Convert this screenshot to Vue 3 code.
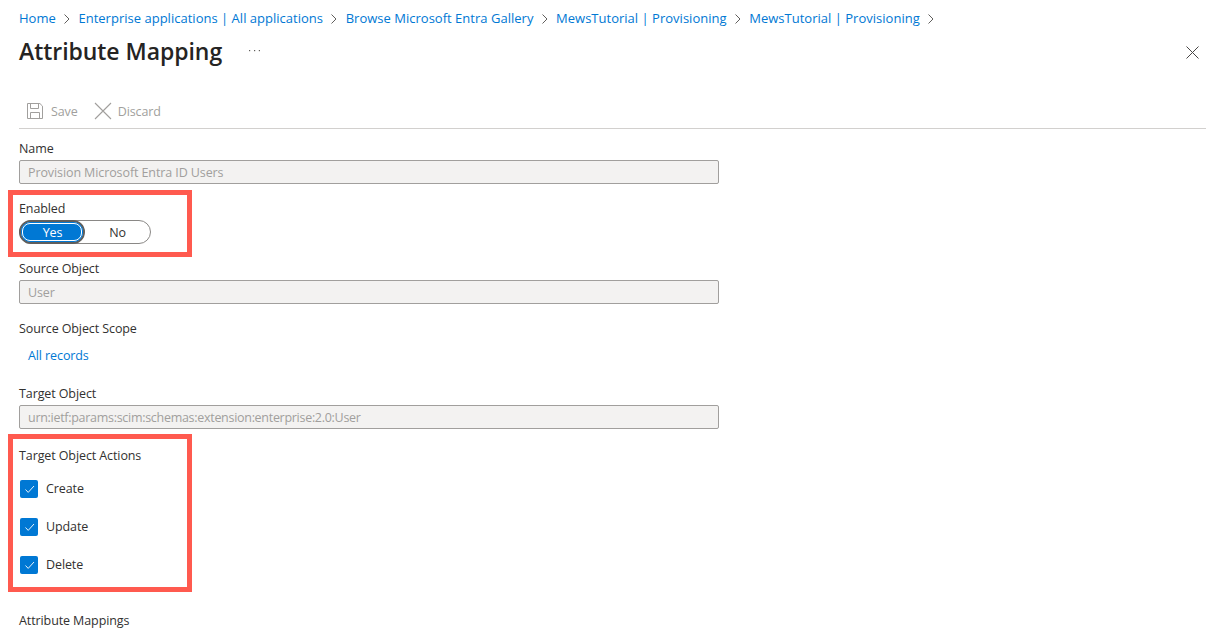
<script setup>
const crumbs = ['Home', 'Enterprise applications | All applications', 'Browse Microsoft Entra Gallery', 'MewsTutorial | Provisioning', 'MewsTutorial | Provisioning']
const actions = ['Create', 'Update', 'Delete']
</script>

<template>
  <div class="page">
    <nav class="crumbs">
      <template v-for="(c, i) in crumbs" :key="i">
        <a class="crumb">{{ c }}</a>
        <svg class="chev" width="8" height="10" viewBox="0 0 8 10"><path d="M1.5 .5 6 5 1.5 9.5" fill="none" stroke="#605e5c" stroke-width="1"/></svg>
      </template>
    </nav>
    <header class="head">
      <h1>Attribute Mapping</h1>
      <svg class="more" width="11" height="3" viewBox="0 0 11 3" fill="#605e5c"><rect x="0" y="1" width="1.2" height="1.2"/><rect x="5" y="1" width="1.2" height="1.2"/><rect x="9.8" y="1" width="1.2" height="1.2"/></svg>
      <svg class="close" width="13" height="13" viewBox="0 0 13 13"><path d="M.5 .5l12 12M12.5 .5l-12 12" stroke="#484644" stroke-width="1" fill="none"/></svg>
    </header>
    <div class="toolbar">
      <span class="tool">
        <svg width="16" height="16" viewBox="0 0 16 16" fill="none" stroke="#a19f9d"><path d="M.5 .5h12.4l2.6 2.6v12.4H.5z"/><path d="M3.5 .5v5h8v-5M3.5 15.5v-6h9v6"/></svg>
        Save
      </span>
      <span class="tool tool2">
        <svg width="18" height="18" viewBox="0 0 18 18" fill="none" stroke="#a19f9d" stroke-width="1.1"><path d="M1 1l16 16M17 1 1 17"/></svg>
        Discard
      </span>
    </div>
    <main class="form">
      <div class="field f-name">
        <label>Name</label>
        <div class="input">Provision Microsoft Entra ID Users</div>
      </div>
      <div class="field f-gap">
        <label>Enabled</label>
        <div class="toggle">
          <span class="opt on"><span class="yes">Yes</span></span>
          <span class="opt">No</span>
        </div>
      </div>
      <div class="field f-gap">
        <label>Source Object</label>
        <div class="input">User</div>
      </div>
      <div class="field f-gap">
        <label>Source Object Scope</label>
        <a class="link">All records</a>
      </div>
      <div class="field f-target">
        <label>Target Object</label>
        <div class="input urn">urn:ietf:params:scim:schemas:extension:enterprise:2.0:User</div>
      </div>
      <div class="field f-actions">
        <label>Target Object Actions</label>
        <div class="checks">
          <div v-for="a in actions" :key="a" class="check">
            <span class="box">
              <svg width="14" height="14" viewBox="0 0 14 14"><path d="M3.5 7.5 6.2 10.4 12 4" fill="none" stroke="#e6f2fb" stroke-width="1"/></svg>
            </span>
            <span class="check-text">{{ a }}</span>
          </div>
        </div>
      </div>
      <div class="section">Attribute Mappings</div>
    </main>
    <div class="mark mark1"></div>
    <div class="mark mark2"></div>
  </div>
</template>

<style scoped>
.page {
  position: relative;
  width: 1206px;
  height: 632px;
  overflow: hidden;
  background: #fff;
  color: #323130;
  font-family: "Open Sans", "Noto Sans", sans-serif;
  font-size: 12.5px;
  letter-spacing: -0.1px;
  box-sizing: border-box;
  padding: 8px 0 0 19px;
}
.crumbs {
  display: flex;
  align-items: center;
  height: 20px;
  gap: 7.3px;
  font-size: 13px;
  letter-spacing: 0.015px;
}
.crumb { color: #0078d4; }
.chev { margin-top: 1px; }
.head {
  display: flex;
  align-items: center;
  height: 36px;
  margin-top: 5px;
}
h1 {
  margin: 0;
  font-size: 23px;
  font-weight: 600;
  letter-spacing: -0.05px;
  color: #252423;
}
.more {
  margin-left: 27px;
  margin-top: -1px;
}
.close { margin-left: auto; margin-right: 7px; margin-top: 2px; }
.toolbar {
  display: flex;
  align-items: center;
  height: 30px;
  margin-top: 27px;
  padding-left: 8px;
  padding-bottom: 2px;
  border-bottom: 1px solid #d2d0ce;
  color: #a19f9d;
}
.tool { display: flex; align-items: center; gap: 8px; }
.tool2 { margin-left: 16px; gap: 6px; }
.form { display: flex; flex-direction: column; }
.field { width: 700px; }
.field label { display: block; height: 18px; line-height: 20px; }
.input {
  box-sizing: border-box;
  height: 24px;
  line-height: 24px;
  margin-top: 3px;
  padding-left: 8px;
  background: #f3f2f1;
  border: 1px solid #a19f9d;
  border-radius: 2px;
  color: #a19f9d;
}
.urn { letter-spacing: -0.29px; }
.f-name { margin-top: 10px; }
.f-gap { margin-top: 15px; }
.f-target { margin-top: 20px; }
.f-actions { margin-top: 17px; }
.toggle {
  box-sizing: border-box;
  display: flex;
  width: 132px;
  height: 24px;
  margin-top: 3px;
  border: 1px solid #8a8886;
  border-radius: 12px;
  align-items: center;
}
.opt {
  display: flex;
  justify-content: center;
  align-items: center;
  width: 65px;
}
.opt.on {
  box-sizing: border-box;
  flex: none;
  width: 66px;
  height: 24px;
  margin-left: -1px;
  border: 2px solid #605e5c;
  border-radius: 12px;
  padding: 1px;
}
.yes {
  width: 100%;
  height: 100%;
  line-height: 18px;
  padding-left: 1px;
  text-align: center;
  background: #0078d4;
  color: #fff;
  border: 1px solid #fff;
  box-shadow: 0 0 0 1px #0078d4;
  border-radius: 8px;
  box-sizing: border-box;
}
.link {
  display: block;
  color: #0078d4;
  margin: 9px 0 0 9px;
  line-height: 20px;
  height: 18px;
}
.checks {
  display: flex;
  flex-direction: column;
  gap: 20px;
  margin-top: 16px;
}
.check { display: flex; align-items: center; gap: 8px; height: 18px; padding-left: 1px; }
.check-text { margin-top: -2px; }
.box {
  display: flex;
  align-items: center;
  justify-content: center;
  width: 18px;
  height: 18px;
  background: #0078d4;
  border-radius: 2px;
}
.section { margin-top: 37px; line-height: 20px; height: 18px; }
.mark {
  position: absolute;
  box-sizing: border-box;
  border: 5px solid #ff5a4f;
}
.mark1 { left: 8px; top: 190px; width: 184px; height: 67px; }
.mark2 { left: 8px; top: 434px; width: 184px; height: 158px; }
</style>
